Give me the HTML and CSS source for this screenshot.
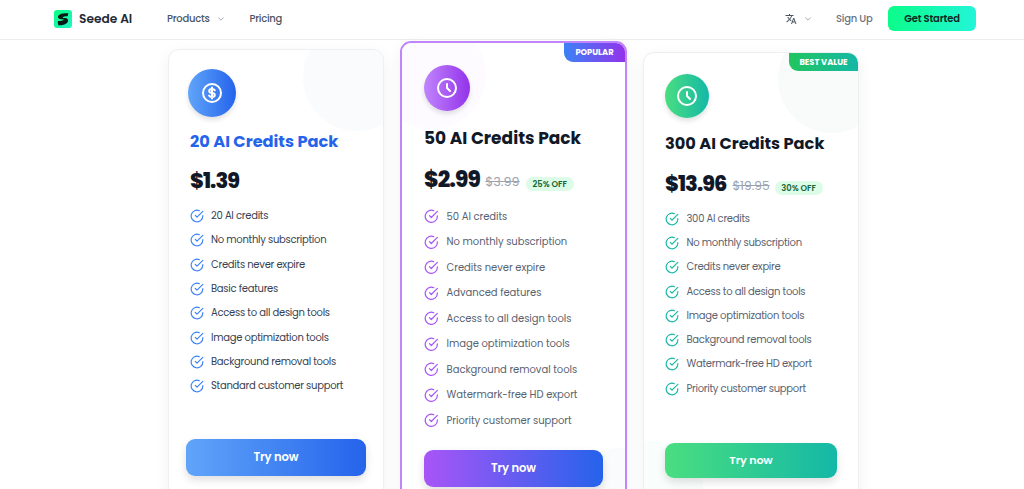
FILE: index.html
```html
<!DOCTYPE html>
<html lang="en">
<head>
    <meta charset="UTF-8">
    <meta name="viewport" content="width=device-width, initial-scale=1.0">
    <title>Seede AI - Pricing</title>
    <link rel="stylesheet" href="styles.css">
</head>
<body>
    <svg class="sprite" width="0" height="0">
        <symbol id="check" viewBox="0 0 24 24">
            <path d="M22 11.080V12a10 10 0 1 1-5.930-9.140"/>
            <path d="M22 4 12 14.010l-3-3"/>
        </symbol>
        <symbol id="clock" viewBox="0 0 24 24">
            <circle cx="12" cy="12" r="9"/>
            <path d="M12 8v4l3 3"/>
        </symbol>
        <symbol id="chevron" viewBox="0 0 10 10">
            <path d="M2 3.500 5 6.500 8 3.500"/>
        </symbol>
    </svg>

    <header class="header">
        <a class="brand">
            <svg class="logo" viewBox="0 0 18 18">
                <defs>
                    <linearGradient id="logoBg" x1="0" y1="0" x2="1" y2="1">
                        <stop offset="0" stop-color="#0bfc83"/>
                        <stop offset="1" stop-color="#22f5c5"/>
                    </linearGradient>
                </defs>
                <rect width="18" height="18" rx="3" fill="url(#logoBg)"/>
                <path d="M14.300 3.200C10 3 5.300 3.400 4.100 6.100 3.400 8 5 9.300 7.200 9.300h2.500C9 11 6 11.200 3.900 11.100c-.2 1.500-.1 2.800.5 4.100 4 .3 8.700-.7 9.600-3.900.5-1.900-.7-3.300-3-3.400H8.600c.5-1.300 2.700-1.700 5-1.600z" fill="#061b14"/>
            </svg>
            <span>Seede AI</span>
        </a>
        <nav class="nav">
            <a class="products">Products</a>
            <svg class="chevron"><use href="#chevron"/></svg>
            <a class="pricing">Pricing</a>
        </nav>
        <div class="actions">
            <svg class="lang" viewBox="0 0 24 24">
                <path d="M12.900 15.100l-2.500-2.500c1.700-1.900 3-4.200 3.700-6.600H17V4h-7V2H8v2H1v2h11.200c-.7 1.900-1.800 3.800-3.200 5.400C8.100 10.300 7.300 9.200 6.700 8h-2c.7 1.600 1.700 3.200 3 4.600l-5.100 5L4 19l5-5 3.100 3.100.8-2zM18.500 10h-2L12 22h2l1.100-3h4.800l1.100 3h2l-4.500-12zm-2.600 7l1.600-4.300 1.600 4.300h-3.200z"/>
            </svg>
            <svg class="chevron"><use href="#chevron"/></svg>
            <a class="signup">Sign Up</a>
            <button class="start">Get Started</button>
        </div>
    </header>

    <main class="plans">
        <section class="card card-blue">
            <div class="icon">
                <svg viewBox="0 0 24 24">
                    <circle cx="12" cy="12" r="9"/>
                    <path d="M14.800 9.300C14.300 8.400 13.300 8 12 8c-1.600 0-2.800.7-2.800 2s1.200 1.800 2.800 2 2.800.7 2.800 2-1.200 2-2.800 2c-1.300 0-2.400-.5-2.900-1.400M12 6.500v11"/>
                </svg>
            </div>
            <h2>20 AI Credits Pack</h2>
            <div class="price"><b>$1.39</b></div>
            <ul>
                <li><svg><use href="#check"/></svg><span>20 AI credits</span></li>
                <li><svg><use href="#check"/></svg><span>No monthly subscription</span></li>
                <li><svg><use href="#check"/></svg><span>Credits never expire</span></li>
                <li><svg><use href="#check"/></svg><span>Basic features</span></li>
                <li><svg><use href="#check"/></svg><span>Access to all design tools</span></li>
                <li><svg><use href="#check"/></svg><span>Image optimization tools</span></li>
                <li><svg><use href="#check"/></svg><span>Background removal tools</span></li>
                <li><svg><use href="#check"/></svg><span>Standard customer support</span></li>
            </ul>
            <button class="try">Try now</button>
        </section>

        <section class="card card-purple">
            <span class="ribbon">POPULAR</span>
            <div class="icon"><svg><use href="#clock"/></svg></div>
            <h2>50 AI Credits Pack</h2>
            <div class="price"><b>$2.99</b><s>$3.99</s><span class="off">25% OFF</span></div>
            <ul>
                <li><svg><use href="#check"/></svg><span>50 AI credits</span></li>
                <li><svg><use href="#check"/></svg><span>No monthly subscription</span></li>
                <li><svg><use href="#check"/></svg><span>Credits never expire</span></li>
                <li><svg><use href="#check"/></svg><span>Advanced features</span></li>
                <li><svg><use href="#check"/></svg><span>Access to all design tools</span></li>
                <li><svg><use href="#check"/></svg><span>Image optimization tools</span></li>
                <li><svg><use href="#check"/></svg><span>Background removal tools</span></li>
                <li><svg><use href="#check"/></svg><span>Watermark-free HD export</span></li>
                <li><svg><use href="#check"/></svg><span>Priority customer support</span></li>
            </ul>
            <button class="try">Try now</button>
        </section>

        <section class="card card-green">
            <span class="ribbon">BEST VALUE</span>
            <div class="icon"><svg><use href="#clock"/></svg></div>
            <h2>300 AI Credits Pack</h2>
            <div class="price"><b>$13.96</b><s>$19.95</s><span class="off">30% OFF</span></div>
            <ul>
                <li><svg><use href="#check"/></svg><span>300 AI credits</span></li>
                <li><svg><use href="#check"/></svg><span>No monthly subscription</span></li>
                <li><svg><use href="#check"/></svg><span>Credits never expire</span></li>
                <li><svg><use href="#check"/></svg><span>Access to all design tools</span></li>
                <li><svg><use href="#check"/></svg><span>Image optimization tools</span></li>
                <li><svg><use href="#check"/></svg><span>Background removal tools</span></li>
                <li><svg><use href="#check"/></svg><span>Watermark-free HD export</span></li>
                <li><svg><use href="#check"/></svg><span>Priority customer support</span></li>
            </ul>
            <button class="try">Try now</button>
        </section>
    </main>
</body>
</html>
```
FILE: styles.css
```css
* {
    box-sizing: border-box;
}
body {
    margin: 0;
    height: 100vh;
    overflow: hidden;
    background: #fff;
    font-family: "Poppins", "Inter", sans-serif;
    color: #111827;
}
svg {
    flex-shrink: 0;
    fill: none;
    stroke: currentColor;
    stroke-width: 2;
    stroke-linecap: round;
    stroke-linejoin: round;
}
.sprite {
    display: block;
}
button {
    border: none;
    padding: 0;
    font-family: inherit;
    cursor: pointer;
}

/* header */
.header {
    display: flex;
    align-items: center;
    height: 40px;
    padding: 0 48px 2px 54px;
    border-bottom: 1px solid #ededee;
    font-size: 10px;
    font-weight: 500;
    letter-spacing: -0.25px;
    color: #4b5563;
}
.brand {
    display: flex;
    align-items: center;
    width: 113px;
    gap: 7px;
    font-size: 12.2px;
    font-weight: 600;
    letter-spacing: 0;
    color: #1f2937;
}
.logo {
    width: 18px;
    height: 18px;
    stroke: none;
}
.nav, .actions {
    display: flex;
    align-items: center;
}
.actions {
    margin-left: auto;
}
.chevron {
    width: 8px;
    height: 8px;
    stroke-width: 1;
    color: #8b929d;
}
.products {
    width: 50px;
}
.pricing {
    margin-left: 24.5px;
}
.lang {
    width: 12px;
    height: 12px;
    margin-right: 7px;
    fill: #4b5563;
    stroke: none;
}
.signup {
    width: 37px;
    margin: 0 15px 0 24px;
    color: #6b7280;
    white-space: nowrap;
}
.start {
    width: 88px;
    height: 25px;
    border-radius: 6px;
    background: linear-gradient(90deg, #0bfc8a, #22f5d8);
    font-size: 10px;
    font-weight: 600;
    letter-spacing: -0.2px;
    color: #10291f;
}

/* plan cards */
.plans {
    display: flex;
    align-items: flex-start;
    gap: 16px;
    padding-left: 168px;
}
.card {
    position: relative;
    overflow: hidden;
    width: 216px;
    height: 480px;
    border: 1px solid #eeeff1;
    border-radius: 11px;
    background: #fff;
    box-shadow: 0 5px 16px rgba(0, 0, 0, 0.06);
    font-size: 10px;
}
.card > * {
    position: relative;
    z-index: 1;
}
/* pale circles in the card corners */
.card::before, .card::after {
    content: "";
    position: absolute;
    width: 108px;
    height: 108px;
    border-radius: 50%;
}
.icon {
    display: flex;
    align-items: center;
    justify-content: center;
    border-radius: 50%;
    box-shadow: 0 3px 5px rgba(0, 0, 0, 0.12);
    color: #fff;
}
.icon svg {
    width: 24px;
    height: 24px;
}
h2 {
    height: 24px;
    margin: 0;
    font-size: 16.2px;
    line-height: 24px;
    font-weight: 700;
    white-space: nowrap;
}
.price {
    display: flex;
    align-items: center;
    height: 28px;
    white-space: nowrap;
}
.price b {
    font-size: 21px;
    font-weight: 800;
    letter-spacing: -0.95px;
}
.price s {
    margin: 5px 0 0 6px;
    font-size: 12.2px;
    color: #9ca3af;
}
.off {
    width: 48px;
    height: 14px;
    margin: 9px 0 0 5px;
    border-radius: 7px;
    background: #dcfce7;
    font-size: 8.3px;
    line-height: 14px;
    font-weight: 600;
    text-align: center;
    color: #166534;
}
ul {
    margin: 0;
    padding: 0;
    list-style: none;
}
li {
    display: flex;
    align-items: center;
    height: 24.3px;
    gap: 7.5px;
    letter-spacing: -0.27px;
    color: #59626f;
    white-space: nowrap;
}
li svg {
    width: 14px;
    height: 14px;
}
.try {
    display: block;
    border-radius: 9px;
    box-shadow: 0 4px 8px rgba(0, 0, 0, 0.13);
    font-size: 11.6px;
    font-weight: 600;
    letter-spacing: -0.15px;
    color: #fff;
}
.card .ribbon {
    position: absolute;
    top: 0;
    right: 0;
    height: 19px;
    border-bottom-left-radius: 9px;
    font-size: 8.3px;
    line-height: 19px;
    font-weight: 700;
    text-align: center;
    color: #fff;
}

.card-blue {
    margin-top: 9px;
    padding: 19px 17px 0;
}
.card-blue::before {
    top: -27px;
    left: 134px;
    background: #f9fbfc;
}
.card-blue .icon {
    width: 48px;
    height: 48px;
    margin-left: 2px;
    background: linear-gradient(90deg, #60a5fa, #2563eb);
}
.card-blue h2 {
    margin: 13px 0 0 4px;
    color: #2563eb;
}
.card-blue .price {
    margin: 12px 0 0 4px;
}
.card-blue ul {
    margin: 10px 0 0 4px;
}
.card-blue li {
    gap: 7px;
    color: #374151;
}
.card-blue li svg {
    color: #3b82f6;
}
.card-blue .try {
    width: 180px;
    height: 37px;
    margin-top: 41px;
    background: linear-gradient(90deg, #60a5fa, #2563eb);
}

.card-purple {
    width: 227px;
    height: 500px;
    margin-top: 1px;
    padding: 22px 22px 0;
    border: 2px solid #c084fc;
}
.card-purple::before {
    top: -22px;
    left: -24px;
    background: #fdfbff;
}
.card-purple::after {
    top: 405px;
    left: 163px;
    background: #f9fbfd;
}
.card-purple .ribbon {
    width: 61px;
    background: linear-gradient(90deg, #3b82f6, #9333ea);
}
.card-purple .icon {
    width: 46px;
    height: 46px;
    background: linear-gradient(90deg, #c084fc, #9333ea);
}
.card-purple h2 {
    margin-top: 15px;
    font-size: 17px;
}
.card-purple .price {
    margin-top: 15px;
}
.card-purple .price b {
    font-size: 22px;
    letter-spacing: -0.9px;
}
.card-purple .price s {
    margin-left: 5.5px;
    font-size: 12.8px;
}
.card-purple .off {
    margin-left: 6px;
}
.card-purple ul {
    margin-top: 11px;
}
.card-purple li {
    height: 25.5px;
    gap: 8px;
    letter-spacing: -0.04px;
}
.card-purple li svg {
    width: 14.6px;
    height: 14.6px;
    color: #a855f7;
}
.card-purple .try {
    width: 179px;
    height: 37px;
    margin-top: 16.5px;
    background: linear-gradient(90deg, #a855f7, #2563eb);
}

.card-green {
    margin-top: 12px;
    padding: 21px 21px 0;
}
.card-green::before {
    top: -28px;
    left: 134px;
    background: #f8fbfa;
}
.card-green::after {
    top: 388px;
    left: -48px;
    background: #f9fdfb;
}
.card-green .ribbon {
    width: 69px;
    height: 18px;
    line-height: 18px;
    background: linear-gradient(90deg, #22c55e, #14b8a6);
}
.card-green .icon {
    width: 44px;
    height: 44px;
    background: linear-gradient(90deg, #4ade80, #14b8a6);
}
.card-green h2 {
    margin-top: 14px;
}
.card-green .price {
    margin-top: 13px;
}
.card-green ul {
    margin-top: 9.5px;
}
.card-green li svg {
    color: #14b8a6;
}
.card-green .try {
    width: 172px;
    height: 35px;
    margin-top: 42px;
    background: linear-gradient(90deg, #4ade80, #14b8a6);
    font-size: 11.2px;
}
```
